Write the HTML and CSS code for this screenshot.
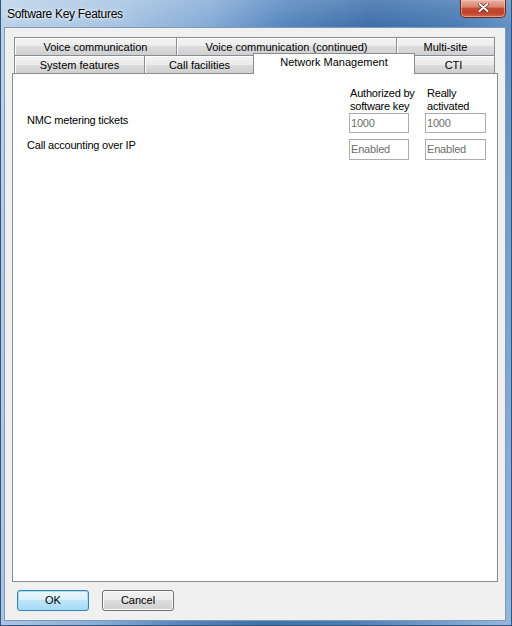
FILE: index.html
```html
<!DOCTYPE html>
<html>
<head>
<meta charset="utf-8">
<title>Software Key Features</title>
<link rel="stylesheet" href="styles.css">
</head>
<body>
<div class="window">
  <div class="titlebar">
    <span class="title">Software Key Features</span>
    <div class="close">
      <svg width="11" height="9" viewBox="0 0 11 9">
        <path d="M1.5 1 L9.5 8 M9.5 1 L1.5 8" stroke="#5a1a14" stroke-width="3.4" stroke-linecap="round" fill="none"/>
        <path d="M1.5 1 L9.5 8 M9.5 1 L1.5 8" stroke="#ffffff" stroke-width="2" stroke-linecap="round" fill="none"/>
      </svg>
    </div>
  </div>
  <div class="client">
    <div class="tabs">
      <div class="tabrow">
        <div class="tab w-vc">Voice communication</div>
        <div class="tab w-vcc">Voice communication (continued)</div>
        <div class="tab w-ms">Multi-site</div>
      </div>
      <div class="tabrow">
        <div class="tab w-sf">System features</div>
        <div class="tab w-cf">Call facilities</div>
        <div class="tab w-nm selected">Network Management</div>
        <div class="tab w-cti">CTI</div>
      </div>
    </div>
    <div class="panel">
      <div class="grid">
        <div></div>
        <div class="head head1">Authorized by<br>software key</div>
        <div class="head head2">Really<br>activated</div>

        <div class="label label1">NMC metering tickets</div>
        <div class="field">1000</div>
        <div class="field">1000</div>

        <div class="label label2">Call accounting over IP</div>
        <div class="field">Enabled</div>
        <div class="field">Enabled</div>
      </div>
    </div>
    <div class="footer">
      <div class="btn default">OK</div>
      <div class="btn">Cancel</div>
    </div>
  </div>
</div>
</body>
</html>
```
FILE: styles.css
```css
* { box-sizing: border-box; }
html, body { margin: 0; padding: 0; }
body {
  width: 512px;
  height: 626px;
  overflow: hidden;
  font-family: "Liberation Sans", Arial, sans-serif;
  font-size: 11px;
  color: #000;
}
.window {
  width: 512px;
  height: 626px;
  display: flex;
  flex-direction: column;
  border: 1px solid #33557d;
  border-top: none;
  background:
    linear-gradient(180deg, rgba(255,255,255,0.15) 0px, rgba(255,255,255,0) 26px),
    linear-gradient(100deg, #bcd3ea 0%, #a6c3e2 20%, #86acd6 34%, #5787bf 46%, #3e70aa 60%, #4a7cb5 74%, #729dcc 88%, #95b7de 100%);
}
.titlebar {
  height: 27px;
  flex: none;
  display: flex;
  justify-content: space-between;
  align-items: flex-start;
}
.title {
  margin: 7px 0 0 6px;
  font-size: 12px;
  line-height: 14px;
  letter-spacing: -0.3px;
  color: #000;
  text-shadow: 0 0 6px rgba(255,255,255,0.9), 0 0 3px rgba(255,255,255,0.8);
}
.close {
  width: 46px;
  height: 18px;
  margin-right: 5px;
  border: 1px solid #6b2a24;
  border-top: none;
  border-radius: 0 0 5px 5px;
  background: linear-gradient(180deg, #eab0a4 0%, #dd8672 40%, #c54a33 50%, #c0412c 75%, #d26a4c 100%);
  box-shadow: inset 0 0 0 1px rgba(255,220,210,0.45);
  display: flex;
  align-items: center;
  justify-content: center;
}
.close svg { display: block; margin-top: -2px; }
.client {
  flex: 1;
  margin: 0 5px 4px 3px;
  border: 1px solid #8299b6;
  background: #f0f0f0;
  display: flex;
  flex-direction: column;
}
.tabs {
  margin: 9px 0 0 9px;
  width: 481px;
}
.tabrow {
  display: flex;
  height: 18px;
  align-items: flex-start;
}
.tab {
  height: 18px;
  line-height: 18px;
  text-align: center;
  white-space: nowrap;
  border: 1px solid #898c95;
  border-bottom: none;
  border-left: none;
  background: linear-gradient(180deg, #f3f3f3 0%, #ebebeb 50%, #dddddd 50%, #cfcfcf 100%);
  box-shadow: inset 1px 1px 0 #ffffff;
}
.tabrow .tab:first-child { border-left: 1px solid #898c95; }
.w-vc { width: 163px; }
.w-vcc { width: 220px; }
.w-ms { width: 98px; }
.w-sf { width: 131px; }
.w-cf { width: 110px; }
.w-nm { width: 158px; }
.w-cti { width: 82px; }
.tab.selected {
  position: relative;
  z-index: 2;
  width: 162px;
  height: 21px;
  margin: -2px -2px 0 -2px;
  border-left: 1px solid #898c95;
  background: #ffffff;
  box-shadow: none;
  line-height: 17px;
}
.panel {
  margin-left: 7px;
  width: 486px;
  height: 509px;
  border: 1px solid #898c95;
  background: #ffffff;
  padding: 13px 11px 0 14px;
}
.grid {
  display: grid;
  grid-template-columns: 1fr 60px 61px;
  column-gap: 16px;
  row-gap: 0;
  align-items: start;
  line-height: 13px;
  letter-spacing: -0.2px;
}
.head { height: 26px; white-space: nowrap; }
.head1 { padding-left: 1px; }
.head2 { padding-left: 2px; }
.label1 { margin-top: 1px; }
.label2 { margin-top: 6px; }
.field {
  height: 20px;
  border: 1px solid #abadb3;
  border-top-color: #a4a7ae;
  background: #fff;
  color: #6d6d6d;
  padding-left: 1px;
  line-height: 18px;
}
.grid .field:nth-child(n+7) { margin-top: 6px; height: 21px; line-height: 19px; }
.footer {
  margin-top: 8px;
  padding-left: 12px;
  display: flex;
  gap: 13px;
}
.btn {
  width: 72px;
  height: 21px;
  border: 1px solid #707070;
  border-radius: 3px;
  background: linear-gradient(180deg, #f2f2f2 0%, #ebebeb 50%, #dddddd 50%, #cfcfcf 100%);
  box-shadow: inset 0 0 0 1px #fbfbfb;
  text-align: center;
  line-height: 19px;
}
.btn.default {
  border-color: #3c7fb1;
  background: linear-gradient(180deg, #eaf6fd 0%, #d9f0fc 50%, #bee6fd 50%, #a7d9f5 100%);
  box-shadow: inset 0 0 0 1px #9be0fb;
}
```
